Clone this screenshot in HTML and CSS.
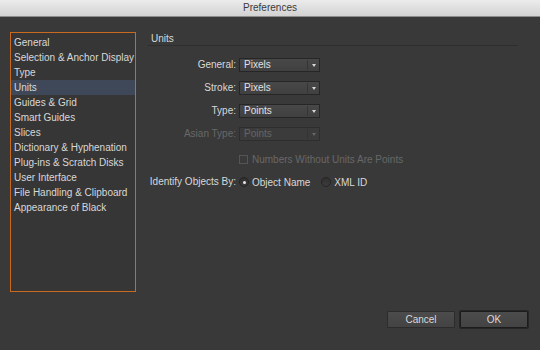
FILE: index.html
```html
<!DOCTYPE html>
<html>
<head>
    <meta charset="utf-8">
    <title>Preferences</title>
    <link rel="stylesheet" href="styles.css">
</head>
<body>
    <div class="titlebar">Preferences</div>

    <div class="content">
        <ul class="categories">
            <li>General</li>
            <li>Selection &amp; Anchor Display</li>
            <li>Type</li>
            <li class="selected">Units</li>
            <li>Guides &amp; Grid</li>
            <li>Smart Guides</li>
            <li>Slices</li>
            <li>Dictionary &amp; Hyphenation</li>
            <li>Plug-ins &amp; Scratch Disks</li>
            <li>User Interface</li>
            <li>File Handling &amp; Clipboard</li>
            <li>Appearance of Black</li>
        </ul>

        <div class="panel">
            <div class="heading">Units</div>
            <div class="form">
                <span class="label">General:</span>
                <div class="select"><span>Pixels</span><i class="arrow"></i></div>

                <span class="label">Stroke:</span>
                <div class="select"><span>Pixels</span><i class="arrow"></i></div>

                <span class="label">Type:</span>
                <div class="select"><span>Points</span><i class="arrow"></i></div>

                <span class="label disabled">Asian Type:</span>
                <div class="select disabled"><span>Points</span><i class="arrow"></i></div>

                <span></span>
                <div class="check disabled"><i class="box"></i>Numbers Without Units Are Points</div>

                <span class="label">Identify Objects By:</span>
                <div class="radios">
                    <span class="radio on"><i class="dot"></i>Object Name</span>
                    <span class="radio"><i class="dot"></i>XML ID</span>
                </div>
            </div>
        </div>
    </div>

    <div class="footer">
        <button class="btn">Cancel</button>
        <button class="btn default">OK</button>
    </div>
</body>
</html>
```

FILE: styles.css
```css
html, body {
    margin: 0;
    padding: 0;
}

body {
    width: 540px;
    height: 350px;
    background: #393939;
    font-family: "Liberation Sans", Arial, sans-serif;
    font-size: 10px;
    color: #d8d8d8;
    display: flex;
    flex-direction: column;
    overflow: hidden;
}

.titlebar {
    height: 16px;
    line-height: 16px;
    text-align: center;
    color: #3a3a3a;
    background: linear-gradient(#ececec, #d2d2d2);
    border-bottom: 1px solid #8c8c8c;
}

.content {
    display: flex;
    padding: 15px 0 0 10px;
    gap: 9px;
}

.categories {
    list-style: none;
    margin: 0;
    width: 124px;
    height: 256px;
    padding: 2px 0 0 0;
    border: 1px solid #c96a1e;
    background: #363636;
}
.categories li {
    height: 15px;
    line-height: 15px;
    padding-left: 3px;
    white-space: nowrap;
}
.categories li.selected {
    background: #3e4858;
}

.panel {
    width: 373px;
}

.heading {
    height: 13px;
    line-height: 14px;
    padding-left: 3px;
    margin-left: 3px;
    border-bottom: 1px solid #2e2e2e;
}

.form {
    display: grid;
    grid-template-columns: 88px 81px;
    column-gap: 3px;
    row-gap: 9px;
    margin-top: 12px;
    margin-left: 3px;
}

.label {
    text-align: right;
    line-height: 14px;
    white-space: nowrap;
}
.disabled {
    color: #686868;
}

.select {
    position: relative;
    height: 12px;
    line-height: 12px;
    border: 1px solid #262626;
    background: linear-gradient(#484848, #404040);
    color: #e0e0e0;
    padding-left: 4px;
}
.select::after {
    content: "";
    position: absolute;
    right: 11px;
    top: 1px;
    bottom: 1px;
    border-left: 1px solid #353535;
}
.select .arrow {
    position: absolute;
    right: 3px;
    top: 5px;
    border-left: 2.5px solid transparent;
    border-right: 2.5px solid transparent;
    border-top: 3px solid #d8d8d8;
}
.select.disabled {
    background: #3b3b3b;
    border-color: #2e2e2e;
    color: #666;
}
.select.disabled .arrow {
    border-top-color: #666;
}
.select.disabled::after {
    border-left-color: #333;
}

.check {
    grid-column: 2;
    display: flex;
    align-items: center;
    gap: 4px;
    white-space: nowrap;
    height: 14px;
    margin-top: 2px;
}
.check .box {
    flex-shrink: 0;
    width: 7px;
    height: 7px;
    border: 1px solid #555;
    background: #3a3a3a;
}

.radios {
    display: flex;
    gap: 11px;
    white-space: nowrap;
    height: 14px;
    align-items: center;
}
.radio {
    flex-shrink: 0;
    display: flex;
    align-items: center;
    gap: 3px;
}
.radio .dot {
    flex-shrink: 0;
    width: 8px;
    height: 8px;
    border-radius: 50%;
    border: 1px solid #242424;
    background: linear-gradient(#303030, #3c3c3c);
    display: flex;
    align-items: center;
    justify-content: center;
}
.radio.on .dot::before {
    content: "";
    width: 3px;
    height: 3px;
    border-radius: 50%;
    background: #e8e8e8;
}

.footer {
    margin-top: auto;
    display: flex;
    justify-content: flex-end;
    gap: 5px;
    padding: 0 12px 22px 0;
}

.btn {
    width: 68px;
    height: 17px;
    padding: 0;
    font-family: inherit;
    font-size: 10px;
    color: #dadada;
    background: linear-gradient(#4c4c4c, #434343);
    border: 1px solid #2c2c2c;
    border-radius: 1px;
}
.btn.default {
    border: 1px solid #1c1c1c;
    box-shadow: 0 0 0 1px #262626;
}
```
